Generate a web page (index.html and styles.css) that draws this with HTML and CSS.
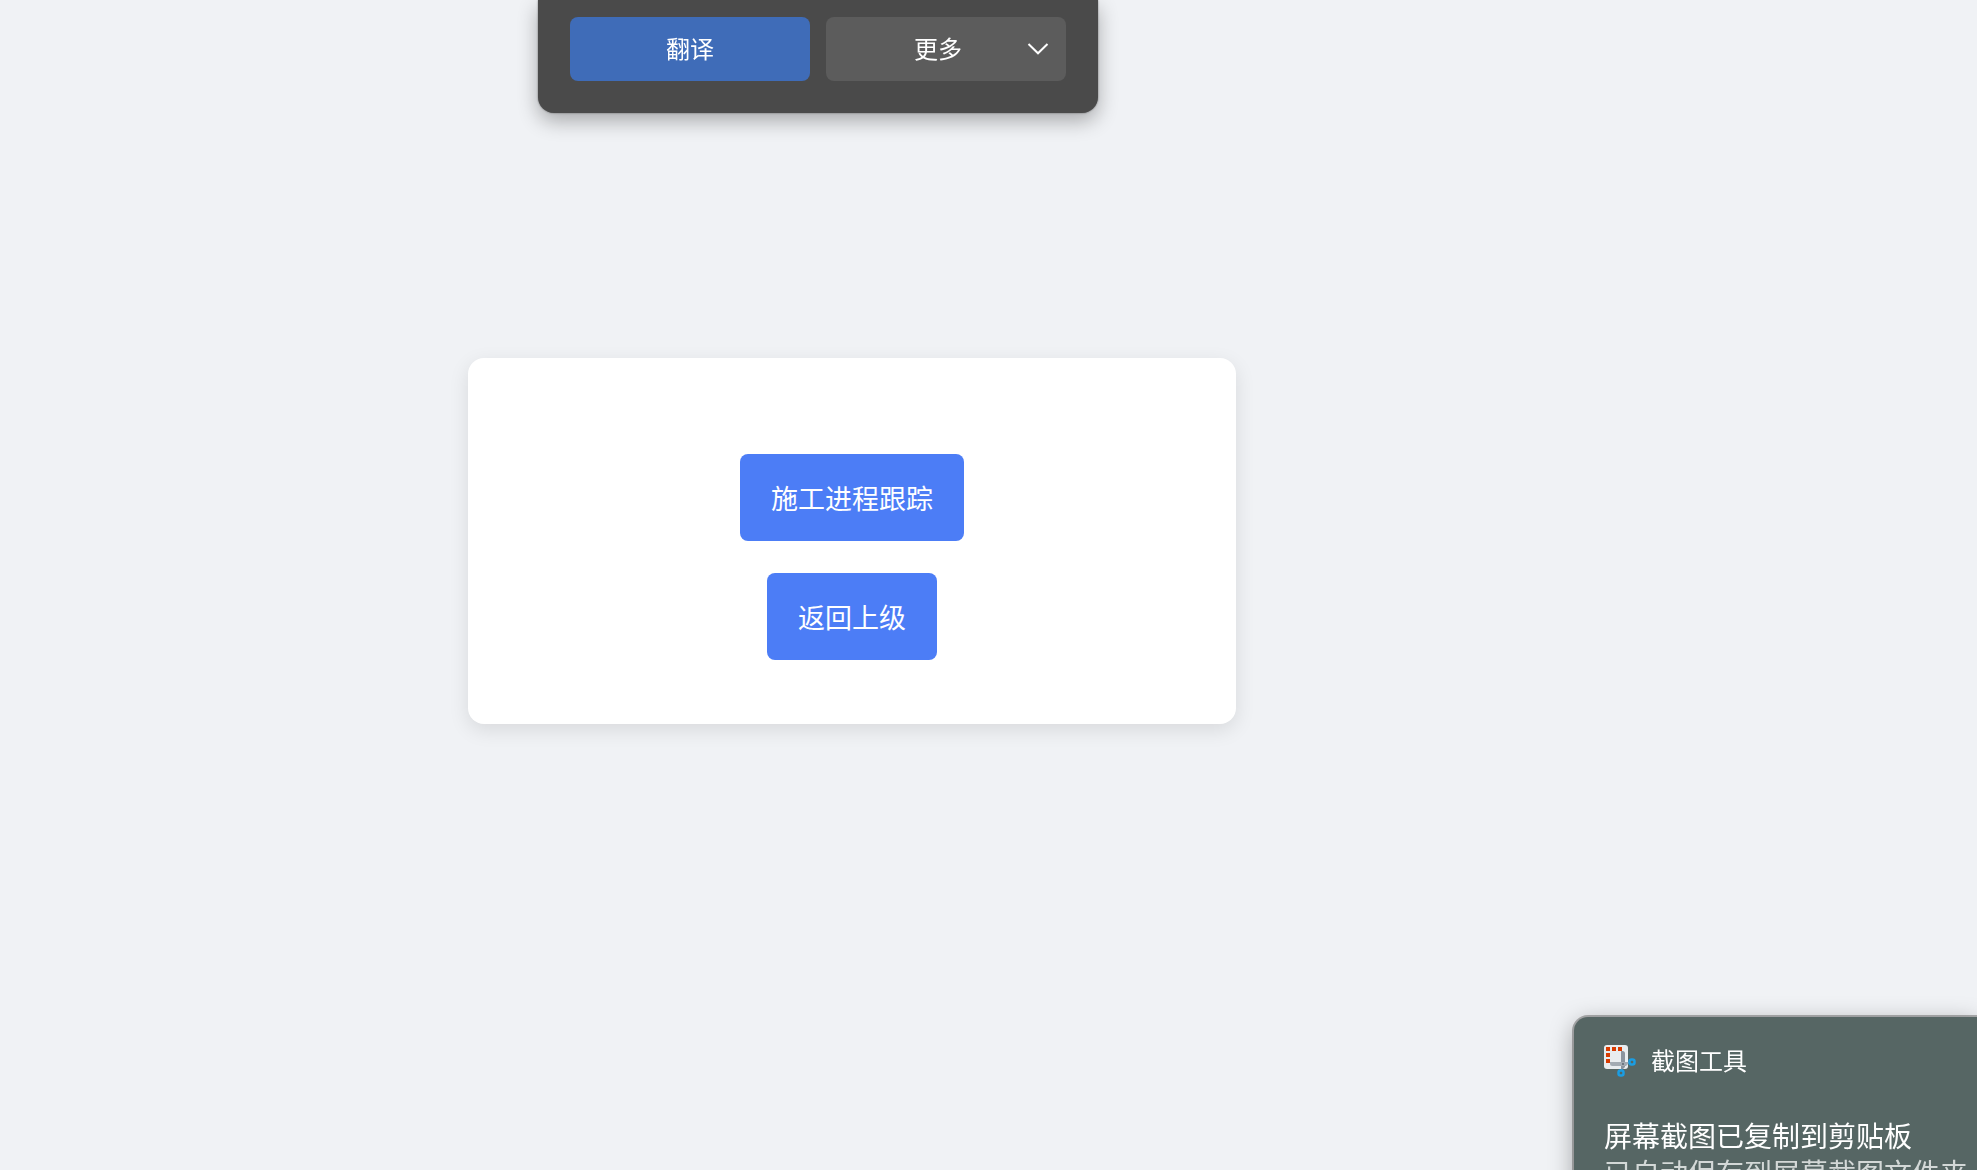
FILE: index.html
```html
<!DOCTYPE html>
<html lang="zh-CN">
<head>
  <meta charset="UTF-8">
  <meta name="viewport" content="width=device-width, initial-scale=1.0">
  <title>施工进程跟踪</title>
  <link rel="stylesheet" href="styles.css">
</head>
<body>

  <main class="page">
    <div class="container">
      <a class="nav-button" href="#progress">施工进程跟踪</a>
      <a class="nav-button" href="#back">返回上级</a>
    </div>
  </main>

  <!-- Translate popup -->
  <div class="popup">
    <button class="popup-button primary" type="button">翻译</button>
    <button class="popup-button more" type="button">
      <span>更多</span>
      <svg class="chevron" viewBox="0 0 22 12" aria-hidden="true">
        <path d="M1.5 1L11 10.3L20.5 1" fill="none" stroke="#fff" stroke-width="2"/>
      </svg>
    </button>
  </div>

  <!-- Notification -->
  <aside class="toast">
    <div class="toast-header">
      <svg class="toast-icon" viewBox="0 0 32 32" aria-hidden="true">
        <rect width="24" height="24" rx="3" fill="#e9edf0"/>
        <path fill="#d83b01" d="M2 2h4v4H2zM8 2h4v4H8zM14 2h4v4h-4zM2 8h4v4H2zM2 14h4v4H2z"/>
        <path fill="#8b949e" d="M17 6h1.500a2.500 2.500 0 0 1 2.500 2.500V22l-4 4z"/>
        <path fill="#a3abb3" d="M6 17h20l-4 4H8.500A2.500 2.500 0 0 1 6 18.500z"/>
        <circle cx="19" cy="19" r="1" fill="#5c6670"/>
        <rect x="25.500" y="14.500" width="5" height="5" rx="2" fill="none" stroke="#1b9de2" stroke-width="2.500"/>
        <rect x="14.500" y="25.500" width="5" height="5" rx="2" fill="none" stroke="#1b9de2" stroke-width="2.500"/>
      </svg>
      <span>截图工具</span>
    </div>
    <p class="toast-title">屏幕截图已复制到剪贴板</p>
    <p class="toast-text">已自动保存到屏幕截图文件夹</p>
  </aside>

</body>
</html>
```

FILE: styles.css
```css
* {
  box-sizing: border-box;
}

body {
  font-family: 'Noto Sans CJK SC', sans-serif;
  margin: 0;
  height: 100vh;
  overflow: hidden;
  background-color: #f0f2f5;
}

.page {
  padding: 358px 273px 0 0;
}

/* White card */
.container {
  display: flex;
  flex-direction: column;
  align-items: center;
  gap: 32px;
  max-width: 768px;
  margin: 0 auto;
  padding: 96px 64px 64px;
  background: #fff;
  border-radius: 16px;
  box-shadow: 0 6px 20px rgba(0, 0, 0, 0.1);
}

.nav-button {
  padding: 24px 31px;
  font-size: 27px;
  line-height: 39px;
  color: #fff;
  text-decoration: none;
  background-color: #4c7df6;
  border-radius: 8px;
}

.nav-button:hover {
  background-color: #3a6be0;
}

/* Translate popup, hangs from the top edge */
.popup {
  position: fixed;
  top: 0;
  left: 538px;
  display: grid;
  grid-template-columns: 1fr 1fr;
  gap: 16px;
  width: 560px;
  padding: 17px 32px 32px;
  background: #4a4a4a;
  border-radius: 0 0 16px 16px;
  box-shadow: 0 0 2px rgba(0, 0, 0, 0.5), 0 8px 20px rgba(0, 0, 0, 0.3);
}

.popup-button {
  height: 64px;
  padding: 0 0 4px;
  border: none;
  border-radius: 8px;
  font-family: inherit;
  font-size: 24px;
  color: #fff;
  background: #5c5c5c;
  cursor: pointer;
}

.popup-button.primary {
  background: #3f6cb8;
}

.popup-button.more {
  display: flex;
  align-items: center;
  padding: 0 17px;
}

.more span {
  flex: 1;
  padding: 0 0 4px 6px;
}

.chevron {
  width: 22px;
  height: 12px;
}

/* Notification */
.toast {
  position: fixed;
  top: 1017px;
  right: 0;
  width: 403px;
  height: 200px;
  padding: 28px 0 0 30px;
  color: #fff;
  background: #566664;
  border-radius: 14px 0 0 0;
  box-shadow: 0 0 0 2px rgba(100, 100, 100, 0.5), 0 6px 24px rgba(0, 0, 0, 0.35);
  white-space: nowrap;
}

.toast-header {
  display: flex;
  align-items: center;
  gap: 15px;
  height: 32px;
  font-size: 24px;
}

.toast-header span {
  padding-bottom: 4px;
}

.toast-icon {
  width: 32px;
  height: 32px;
}

.toast p {
  margin: 0;
  font-size: 28px;
  line-height: 37px;
}

.toast .toast-title {
  margin-top: 40px;
}

.toast-text {
  color: #d3d8d7;
}
```
